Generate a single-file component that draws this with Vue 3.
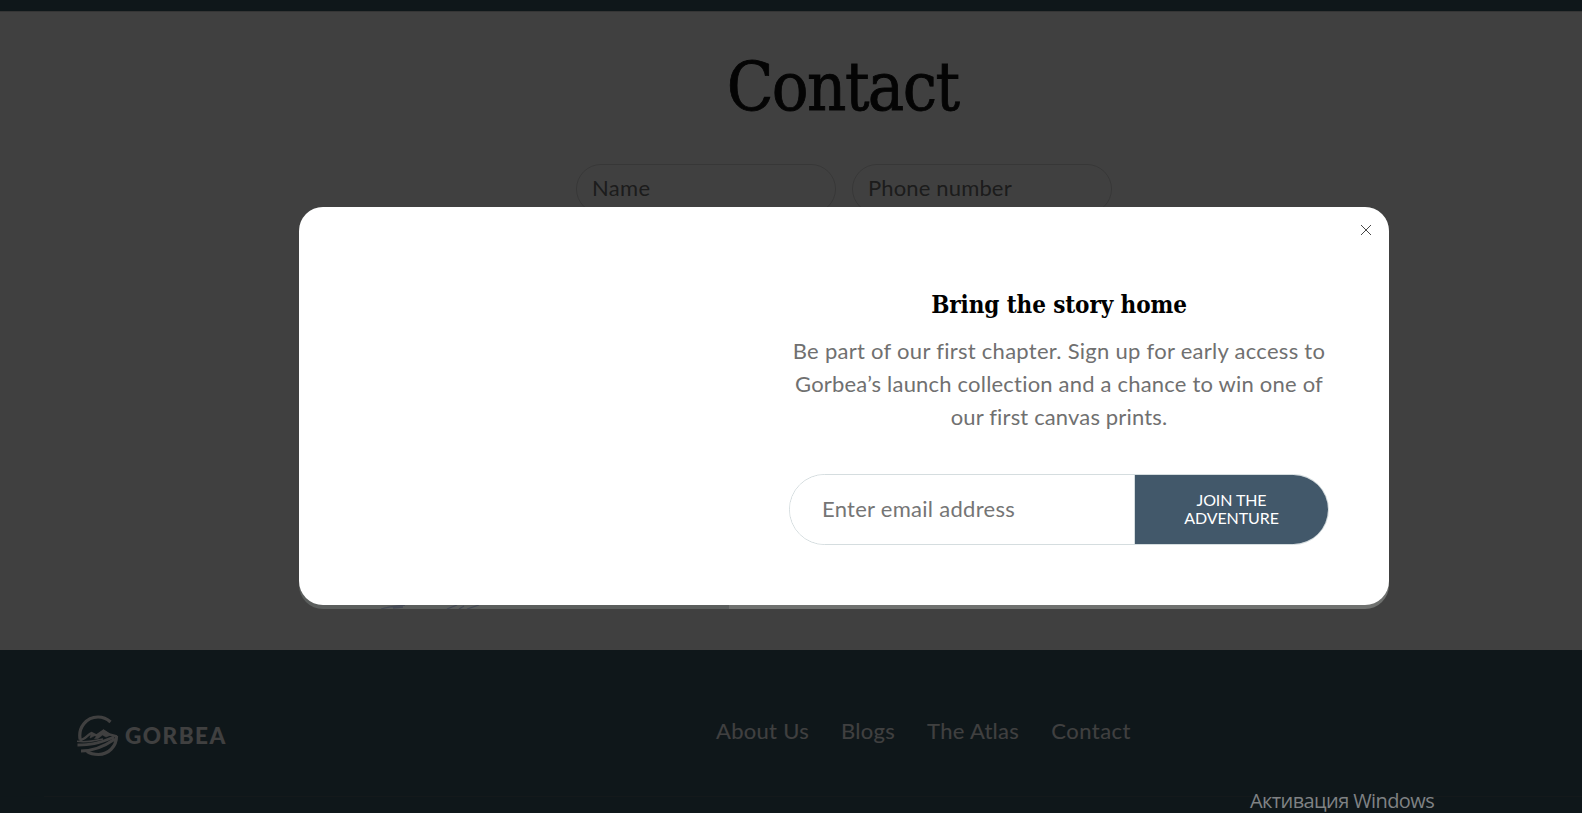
<script setup>
import { ref } from 'vue'

const showPopup = ref(true)
const name = ref('')
const phone = ref('')
const email = ref('')

const footerLinks = [
  { key: 'about', label: 'About Us' },
  { key: 'blogs', label: 'Blogs' },
  { key: 'atlas', label: 'The Atlas' },
  { key: 'reach', label: 'Contact' },
]

function closePopup() {
  showPopup.value = false
}
</script>

<template>
  <div class="viewport">
    <div class="page">
      <header class="announcement"></header>

      <main class="contact">
        <h1 class="contact-title">Contact</h1>
        <form class="contact-form" @submit.prevent>
          <input v-model="name" class="field" type="text" placeholder="Name" />
          <input v-model="phone" class="field phone" type="tel" placeholder="Phone number" />
        </form>
      </main>

      <footer class="footer">
        <div class="footer-row">
          <a class="logo" href="#">
            <svg class="logo-mark" viewBox="0 0 42 42" fill="none" stroke="#fff">
              <path d="M3.200 24.500C.8 12.500 9.500 2 21 2C26 2 30 3.800 33.500 7" stroke-width="3.200" />
              <path d="M2.500 25.500C8 24.500 11 19.500 14.500 18L19.500 20.500L26.500 15.800L32.500 19.500L40 21.500" stroke-width="2.400" />
              <path d="M14.500 17.500L18 20.500L13 23ZM26.500 15L34 20L29 22L25.500 20L21 23.500L17.500 23.500Z" fill="#fff" stroke-width=".6" />
              <path d="M0 26.300C12 28 18 25 26 24" stroke-width="1.500" />
              <path d="M.5 30C13 30 20 29 37 22" stroke-width="2.800" />
              <path d="M4 36C15 36 25 33 38 24" stroke-width="2.800" />
              <path d="M10 36.500C13 38.500 17 39.500 21.500 39.500C31.500 39.500 39.500 31.500 39.500 21" stroke-width="3.200" />
            </svg>
            <span class="logo-text">GORBEA</span>
          </a>
          <nav class="footer-nav">
            <a v-for="link in footerLinks" :key="link.key" :class="link.key" href="#">{{ link.label }}</a>
          </nav>
        </div>
        <div class="footer-line"></div>
      </footer>
    </div>

    <div v-if="showPopup" class="overlay">
      <div class="popup-shell">
        <svg class="shell-art" viewBox="0 0 110 4" width="110" height="4">
          <path d="M2 4C10 1.500 18 1 26 0M14 3L24 2M68 4L78 0M80 4L85 1M88 4L100 0" stroke="#454a55" stroke-width="1.300" fill="none" />
        </svg>
        <section class="popup">
          <div class="popup-media"></div>
          <div class="popup-body">
            <h2 class="popup-title">Bring the story home</h2>
            <p class="popup-text">
              <span class="line-one">Be part of our first chapter. Sign up for early access to</span>
              <span class="line-two">Gorbea’s launch collection and a chance to win one of</span>
              <span class="line-three">our first canvas prints.</span>
            </p>
            <form class="signup" @submit.prevent>
              <input v-model="email" class="signup-input" type="email" placeholder="Enter email address" />
              <button class="signup-btn" type="submit">JOIN THE<br />ADVENTURE</button>
            </form>
          </div>
          <button class="close-btn" aria-label="Close" @click="closePopup">
            <svg viewBox="0 0 12 12" width="12" height="12">
              <path d="M1 1L11 11M11 1L1 11" stroke="#333" stroke-width=".9" />
            </svg>
          </button>
        </section>
      </div>
    </div>

    <div class="system-note">Активация Windows</div>
  </div>
</template>

<style>
body {
  margin: 0;
  overflow: hidden;
}
</style>

<style scoped>
.viewport {
  position: relative;
  width: 100%;
  height: 813px;
  overflow: hidden;
  font-family: Lato, 'Liberation Sans', sans-serif;
}

.viewport * {
  box-sizing: border-box;
}

/* page is wider than the window, the right edge is cut off */
.page {
  width: 1688px;
  height: 813px;
  display: flex;
  flex-direction: column;
  background: #fff;
}

.announcement {
  flex: none;
  height: 11px;
  background: #3e5b68;
}

.contact {
  flex: none;
  height: 639px;
  padding-top: 27px;
  border-top: 1px solid #d4d4d4;
}

.contact-title {
  margin: 0;
  padding-right: 3px;
  height: 96px;
  line-height: 96px;
  font-family: 'DejaVu Serif Condensed', 'DejaVu Serif', serif;
  font-stretch: condensed;
  font-size: 68px;
  font-weight: 400;
  letter-spacing: -1.6px;
  text-align: center;
  color: #111;
  -webkit-text-stroke: 0.8px #111;
}

.contact-form {
  display: flex;
  justify-content: center;
  gap: 16px;
  margin-top: 29px;
}

.field {
  width: 260px;
  height: 50px;
  padding: 0 15px 3px;
  border: 1px solid #dadada;
  border-radius: 25px;
  background: transparent;
  font-family: inherit;
  font-size: 22px;
  letter-spacing: 0.35px;
  outline: none;
}

.field.phone {
  letter-spacing: 0.15px;
}

.field::placeholder {
  color: #6f6f6f;
  opacity: 1;
}

.footer {
  flex: 1;
  padding: 65px 44px 0;
  background: #3e5b68;
}

.footer-row {
  display: flex;
  height: 81px;
  padding-left: 33px;
}

.logo {
  display: flex;
  flex: none;
  width: 639px;
  height: 42px;
  color: #fff;
  text-decoration: none;
}

.logo-mark {
  width: 42px;
  height: 42px;
}

.logo-text {
  margin-left: 6px;
  line-height: 42px;
  font-size: 22.5px;
  font-weight: 900;
  letter-spacing: 1.5px;
}

.footer-nav {
  display: flex;
  gap: 32px;
  line-height: 32px;
  font-size: 22px;
}

.footer-nav a {
  color: #fff;
  text-decoration: none;
  letter-spacing: 0.3px;
  white-space: nowrap;
}

.footer-nav .reach {
  letter-spacing: 0.5px;
}

.footer-line {
  height: 1px;
  background: #52636c;
}

.overlay {
  position: absolute;
  top: 0;
  left: 0;
  width: 1688px;
  height: 813px;
  display: flex;
  justify-content: center;
  align-items: flex-start;
  padding-top: 207px;
  box-sizing: border-box;
  background: rgba(0, 0, 0, 0.75);
}

.popup-shell {
  position: relative;
  width: 1090px;
  height: 402px;
  border-radius: 24px;
  background: linear-gradient(90deg, #5b5e5d 430px, #6f716f 430px);
}

.shell-art {
  position: absolute;
  left: 80px;
  bottom: 0;
}

.popup {
  position: relative;
  display: flex;
  height: 398px;
  border-radius: 24px;
  background: #fff;
}

.popup-media {
  width: 430px;
}

.popup-body {
  flex: 1;
  padding: 80px 60px 0;
}

.popup-title {
  margin: 0;
  line-height: 36px;
  font-family: 'DejaVu Serif Condensed', 'DejaVu Serif', serif;
  font-stretch: condensed;
  font-size: 24px;
  font-weight: 700;
  letter-spacing: -0.1px;
  text-align: center;
  white-space: nowrap;
  color: #000;
}

.popup-text {
  margin: 11px 0 0;
  font-size: 22px;
  line-height: 33px;
  text-align: center;
  color: #707070;
}

.popup-text span {
  display: block;
  white-space: nowrap;
}

.line-one {
  letter-spacing: 0.28px;
}

.line-two {
  letter-spacing: 0.2px;
}

.line-three {
  letter-spacing: 0.15px;
}

.signup {
  display: flex;
  width: 540px;
  height: 71px;
  margin-top: 41px;
  border: 1px solid #d5dddf;
  border-radius: 36px;
  overflow: hidden;
}

.signup-input {
  width: 345px;
  padding: 0 32px 2px;
  border: 0;
  border-right: 1px solid #d5dddf;
  background: #fff;
  font-family: inherit;
  font-size: 22px;
  letter-spacing: 0.28px;
  outline: none;
}

.signup-input::placeholder {
  color: #757575;
  opacity: 1;
}

.signup-btn {
  flex: 1;
  padding: 0 0 2px;
  border: 0;
  background: #42586a;
  color: #fff;
  font-family: inherit;
  font-size: 16px;
  letter-spacing: -0.1px;
  line-height: 18px;
  cursor: pointer;
}

.close-btn {
  position: absolute;
  top: 17px;
  right: 17px;
  width: 12px;
  height: 12px;
  padding: 0;
  border: 0;
  background: none;
  cursor: pointer;
}

.close-btn svg {
  display: block;
}

.system-note {
  position: absolute;
  left: 1250px;
  top: 786px;
  font-family: 'Open Sans', sans-serif;
  font-size: 20px;
  letter-spacing: -0.6px;
  line-height: 30px;
  color: #7f8284;
  white-space: nowrap;
}
</style>
